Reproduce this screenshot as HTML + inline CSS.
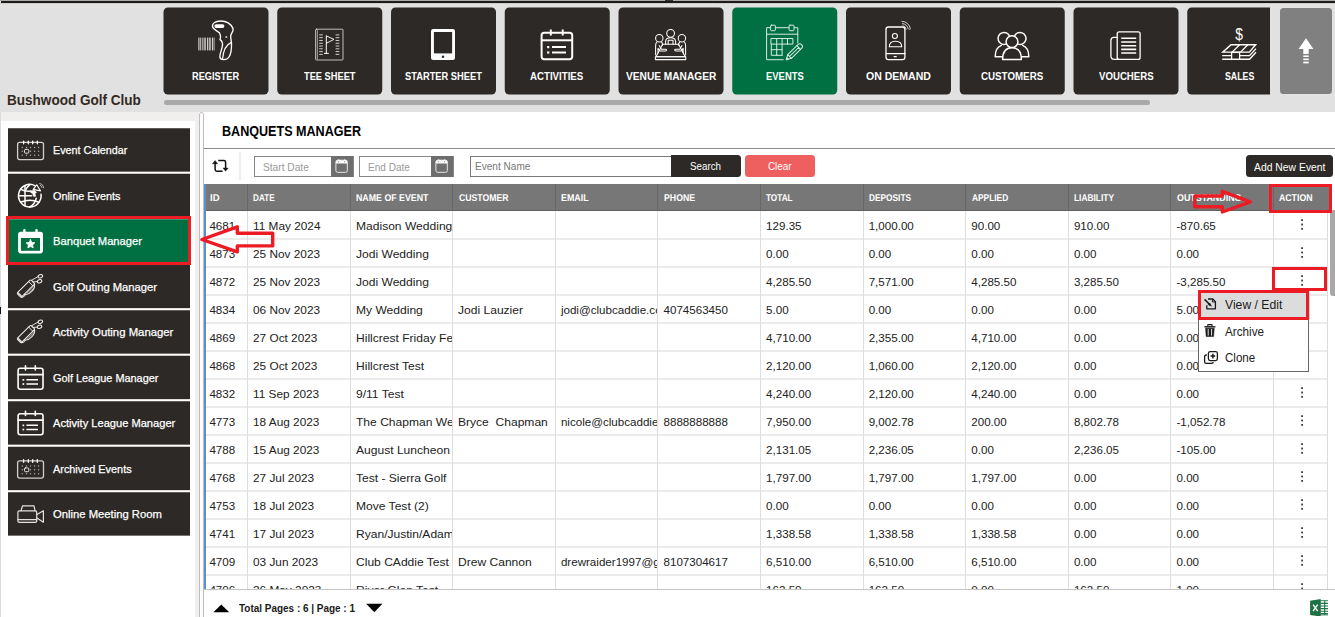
<!DOCTYPE html>
<html lang="en"><head><meta charset="utf-8"><title>Banquets Manager</title>
<style>
html,body{margin:0;padding:0;}
body{width:1335px;height:617px;overflow:hidden;background:#fff;position:relative;font-family:"Liberation Sans",sans-serif;}
.b{position:absolute;}
.t{position:absolute;white-space:pre;transform-origin:0 0;display:block;}
svg{position:absolute;}
</style></head>
<body>
<div class="b" style="left:0.00px;top:0.00px;width:1335.00px;height:112.00px;background:#e1e1e1;"></div>
<div class="b" style="left:0.00px;top:0.00px;width:1335.00px;height:1.00px;background:#ababab;"></div>
<div class="b" style="left:1.00px;top:1.00px;width:1334.00px;height:2.00px;background:#1d1a18;"></div>
<div class="b" style="left:0.00px;top:3.00px;width:1335.00px;height:1.00px;background:#cdcdcd;"></div>
<div class="b" style="left:665.40px;top:0.00px;width:7.50px;height:1.00px;background:#333;"></div>
<span class="t" style="left:7.30px;top:89.81px;font-size:14.4px;line-height:20px;font-weight:700;color:#33291f;transform:scaleX(0.9410);">Bushwood Golf Club</span>
<div class="b" style="left:163.00px;top:7.00px;width:1107.30px;height:88.00px;overflow:hidden;"><svg width="1172" height="88" viewBox="163 7 1172 88" style="left:0;top:0"><rect x="163.5" y="7.45" width="105" height="87" rx="4.5" fill="#2d2926"/><g fill="none" stroke="#fff" stroke-width="1.2" stroke-linecap="round" stroke-linejoin="round"><rect x="198.3" y="37.6" width="1.2" height="12.8" fill="#cfcfcf" stroke="none"/><rect x="200.2" y="37.6" width="0.8" height="12.8" fill="#cfcfcf" stroke="none"/><rect x="201.8" y="37.6" width="0.9" height="12.8" fill="#cfcfcf" stroke="none"/><rect x="203.6" y="37.6" width="1.1" height="12.8" fill="#cfcfcf" stroke="none"/><rect x="205.2" y="37.6" width="0.8" height="12.8" fill="#cfcfcf" stroke="none"/><rect x="207.0" y="37.6" width="1.0" height="12.8" fill="#cfcfcf" stroke="none"/><rect x="208.7" y="37.6" width="1.1" height="12.8" fill="#cfcfcf" stroke="none"/><rect x="210.3" y="37.6" width="0.8" height="12.8" fill="#cfcfcf" stroke="none"/><rect x="212.0" y="37.6" width="1.0" height="12.8" fill="#cfcfcf" stroke="none"/><rect x="213.6" y="37.6" width="0.9" height="12.8" fill="#cfcfcf" stroke="none"/><path d="M212.4 26.2 C212.2 23.2 215.5 21.1 220.5 21 C226 21 231 24 233.1 28.6 C233.6 30.6 232 32.8 230.8 35 C230.3 37.5 231.4 40 231.5 43.5 C231.6 49 231 54 229 57 C227.5 59.2 224.5 59.8 222 59.4 C220 59 219.6 57.2 220 55 C220.6 51.5 222.6 47.5 222.6 44 C222.6 42 221.6 40.6 220 39.4 C220.6 38 220.9 36.6 220.4 35.4 C219.9 34 219.3 33 219.4 32.6 C217 31 212.8 29.4 212.4 26.2 Z" stroke-width="1.35"/><path d="M231 42.6 C226.5 44.5 223.4 50 222.6 58.8" stroke-width="1.2"/><rect x="214.3" y="24.2" width="10.1" height="3.8" rx="1.9" fill="#fff" stroke="none"/><ellipse cx="226.3" cy="37" rx="1.1" ry="0.8" fill="#fff" stroke="none"/></g><rect x="277.25" y="7.45" width="105" height="87" rx="4.5" fill="#2d2926"/><g fill="none" stroke="#fff" stroke-width="1.2" stroke-linecap="round" stroke-linejoin="round"><rect x="315.6" y="29.2" width="27.4" height="30.8" rx="0.8" stroke="#e4e4e4" stroke-width="0.8"/><path d="M317.3 30.5V59" stroke="#e4e4e4" stroke-width="0.7"/><path d="M319.2 34.90H322.8M335.6 34.90H339.3" stroke="#d0d0d0" stroke-width="1" stroke-linecap="butt"/><path d="M319.2 37.68H322.8M335.6 37.68H339.3" stroke="#d0d0d0" stroke-width="1" stroke-linecap="butt"/><path d="M319.2 40.46H322.8M335.6 40.46H339.3" stroke="#d0d0d0" stroke-width="1" stroke-linecap="butt"/><path d="M319.2 43.24H322.8M335.6 43.24H339.3" stroke="#d0d0d0" stroke-width="1" stroke-linecap="butt"/><path d="M319.2 46.02H322.8M335.6 46.02H339.3" stroke="#d0d0d0" stroke-width="1" stroke-linecap="butt"/><path d="M319.2 48.80H322.8M335.6 48.80H339.3" stroke="#d0d0d0" stroke-width="1" stroke-linecap="butt"/><path d="M319.2 51.58H322.8M335.6 51.58H339.3" stroke="#d0d0d0" stroke-width="1" stroke-linecap="butt"/><path d="M319.2 54.36H322.8M335.6 54.36H339.3" stroke="#d0d0d0" stroke-width="1" stroke-linecap="butt"/><path d="M326.3 36V53.3M324.4 53.4H328.4" stroke-width="1"/><path d="M326.4 36L334 39.4L326.4 43.2" stroke-width="0.9"/></g><rect x="391.0" y="7.45" width="105" height="87" rx="4.5" fill="#2d2926"/><g fill="none" stroke="#fff" stroke-width="1.2" stroke-linecap="round" stroke-linejoin="round"><rect x="431" y="29.1" width="24" height="30.9" rx="2.2" fill="#fff" stroke="none"/><rect x="433.9" y="32" width="18.2" height="21.4" fill="#2d2926" stroke="none"/><circle cx="443" cy="56.8" r="1.25" fill="#2d2926" stroke="none"/></g><rect x="504.75" y="7.45" width="105" height="87" rx="4.5" fill="#2d2926"/><g fill="none" stroke="#fff" stroke-width="1.2" stroke-linecap="round" stroke-linejoin="round"><rect x="541.6" y="32.7" width="30.6" height="26.5" rx="2.6" stroke-width="2"/><path d="M541.6 40.3H572.2" stroke-width="2" stroke-linecap="butt"/><path d="M550.8 29.5V35.6M562.7 29.5V35.6" stroke-width="2" stroke-linecap="butt"/><path d="M552 47.1H566M552 52.5H566" stroke-width="2" stroke-linecap="butt"/><rect x="547.1" y="46" width="2.2" height="2.2" fill="#fff" stroke="none"/><rect x="547.1" y="51.4" width="2.2" height="2.2" fill="#fff" stroke="none"/></g><rect x="618.5" y="7.45" width="105" height="87" rx="4.5" fill="#2d2926"/><g fill="none" stroke="#fff" stroke-width="1.2" stroke-linecap="round" stroke-linejoin="round"><g stroke-width="1.05"><circle cx="670.6" cy="33.3" r="3.9"/><circle cx="659.3" cy="38.2" r="3.7"/><circle cx="681.9" cy="38.2" r="3.7"/><path d="M665.6 44V41.5C665.6 39 667.5 37.8 670.6 37.8C673.7 37.8 675.6 39 675.6 41.5V44"/><path d="M668.2 44V40.3H673V44"/><path d="M662.6 44.3H678.6L685.2 56.8H656Z"/><path d="M655.4 56.8H685.8V59.6H655.4Z"/><path d="M656.8 42.2C655.8 43 655.6 44 655.6 46V55M661.6 42.3C662.6 43 662.8 44.2 662.4 45.4"/><path d="M659.2 45.6L661.4 49.2H665.6C666.8 49.2 666.8 50.9 665.6 50.9H660L658 48.4V53"/><path d="M684.4 42.2C685.4 43 685.6 44 685.6 46V55M679.6 42.3C678.6 43 678.4 44.2 678.8 45.4"/><path d="M682 45.6L679.8 49.2H675.6C674.4 49.2 674.4 50.9 675.6 50.9H681.2L683.2 48.4V53"/></g></g><rect x="732.25" y="7.45" width="105" height="87" rx="4.5" fill="#007042"/><g fill="none" stroke="#fff" stroke-width="1.2" stroke-linecap="round" stroke-linejoin="round"><g stroke="#d5ebe0" stroke-width="1"><path d="M797.8 43V27.7H766.6V59.7H783.2"/><path d="M766.6 34.2H797.8"/><rect x="770.6" y="25.2" width="4.8" height="5.5" rx="0.8" fill="#007042"/><rect x="789.1" y="25.2" width="4.9" height="5.5" rx="0.8" fill="#007042"/><path d="M771.3 38.5H792.9V44.1H771.3ZM776.7 38.5V55.3M782.1 38.5V55.3M787.5 38.5V44.1M771.3 44.1V55.3H782.1M771.3 49.7H782.1"/><g transform="translate(786.3 59.7) rotate(-44.5)"><path d="M0 0L4.6 -2.6H19.2C20.6 -2.6 21.4 -1.6 21.4 0C21.4 1.6 20.6 2.6 19.2 2.6H4.6Z"/><path d="M4.6 -2.6V2.6M17.4 -2.6V2.6M4.6 0H17.4"/><path d="M0 0L1.8 -1V1Z" fill="#d5ebe0"/></g></g></g><rect x="846.0" y="7.45" width="105" height="87" rx="4.5" fill="#2d2926"/><g fill="none" stroke="#fff" stroke-width="1.2" stroke-linecap="round" stroke-linejoin="round"><rect x="886" y="27" width="18.9" height="32.6" rx="2.4" stroke-width="1.3"/><path d="M886 53.6H904.9" stroke-width="1.2"/><path d="M894.2 56.7H896.2" stroke-width="1.3"/><circle cx="894.9" cy="36" r="2.5" stroke-width="1.1"/><path d="M889.3 46.8C889.3 43.3 891.6 41.3 895.5 41.3C899.4 41.3 901.7 43.3 901.7 46.8Z" stroke-width="1.1"/><path d="M902 21.3A8.3 8.3 0 0 1 910.3 28.6M902.4 23.6A6 6 0 0 1 908.2 28.9M902.8 25.8A3.8 3.8 0 0 1 906.2 29.2" stroke-width="0.9" stroke="#e4e4e4"/><circle cx="909.9" cy="29.6" r="0.5" fill="#ddd" stroke="none"/></g><rect x="959.75" y="7.45" width="105" height="87" rx="4.5" fill="#2d2926"/><g fill="none" stroke="#fff" stroke-width="1.2" stroke-linecap="round" stroke-linejoin="round"><g stroke-width="1.5"><path d="M1006 44.1A6 6 0 1 1 1009.6 36.2"/><path d="M1014.4 36.2A6 6 0 1 1 1018 44.1"/><path d="M1003.4 56.7H995.2C995.2 51 997 47 1001.4 45.4"/><path d="M1020.6 56.7H1028.8C1028.8 51 1027 47 1022.6 45.4"/><circle cx="1012" cy="41.7" r="5.9" fill="#2d2926"/><path d="M1002.6 59.6C1002.6 52 1005.6 47.8 1012 47.8C1018.4 47.8 1021.4 52 1021.4 59.6Z" fill="#2d2926"/></g></g><rect x="1073.5" y="7.45" width="105" height="87" rx="4.5" fill="#2d2926"/><g fill="none" stroke="#fff" stroke-width="1.2" stroke-linecap="round" stroke-linejoin="round"><rect x="1117.2" y="31.8" width="22.9" height="27.6" rx="2" stroke-width="1.3"/><path d="M1117.2 37.3H1114C1112 37.3 1110.9 38.6 1110.9 40.4V55.8C1110.9 58 1112.2 59.4 1114.4 59.4H1119" stroke-width="1.3"/><path d="M1121.2 38.3H1136.2M1121.2 42H1136.2M1121.2 45.8H1136.2M1121.2 49.4H1136.2M1121.2 53H1136.2" stroke-width="1.6" stroke-linecap="butt"/></g><rect x="1187.25" y="7.45" width="105" height="87" rx="4.5" fill="#2d2926"/><g fill="none" stroke="#fff" stroke-width="1.2" stroke-linecap="round" stroke-linejoin="round"><text transform="translate(1239.1 40) scale(0.84 1)" x="0" y="0" font-family="Liberation Sans, sans-serif" font-size="16.5" text-anchor="middle" fill="#fff" stroke="none">$</text><g stroke-width="1.45" stroke-linejoin="miter" stroke-linecap="butt"><path d="M1222.8 52.1L1231 44.8H1255.6L1249.4 52.1Z"/><path d="M1239.6 44.8L1232.2 52.1M1247.8 44.8L1240.6 52.1" stroke-width="1.3"/><path d="M1222.2 55.6H1249.6L1256 48.6M1222.2 59.2H1249.6L1256 52.2" stroke-width="1.35"/><rect x="1231.6" y="52.4" width="8" height="6.8" fill="#2d2926" stroke-width="1.3"/></g></g></svg><span class="t" style="left:29.20px;top:61.69px;font-size:11px;line-height:15px;font-weight:700;color:#fff;transform:scaleX(0.8393);">REGISTER</span><span class="t" style="left:140.80px;top:61.69px;font-size:11px;line-height:15px;font-weight:700;color:#fff;transform:scaleX(0.8425);">TEE SHEET</span><span class="t" style="left:241.85px;top:61.69px;font-size:11px;line-height:15px;font-weight:700;color:#fff;transform:scaleX(0.8464);">STARTER SHEET</span><span class="t" style="left:367.40px;top:61.69px;font-size:11px;line-height:15px;font-weight:700;color:#fff;transform:scaleX(0.8808);">ACTIVITIES</span><span class="t" style="left:462.65px;top:61.69px;font-size:11px;line-height:15px;font-weight:700;color:#fff;transform:scaleX(0.9233);">VENUE MANAGER</span><span class="t" style="left:602.65px;top:61.69px;font-size:11px;line-height:15px;font-weight:700;color:#fff;transform:scaleX(0.8588);">EVENTS</span><span class="t" style="left:702.85px;top:61.69px;font-size:11px;line-height:15px;font-weight:700;color:#fff;transform:scaleX(0.9566);">ON DEMAND</span><span class="t" style="left:817.95px;top:61.69px;font-size:11px;line-height:15px;font-weight:700;color:#fff;transform:scaleX(0.8874);">CUSTOMERS</span><span class="t" style="left:935.50px;top:61.69px;font-size:11px;line-height:15px;font-weight:700;color:#fff;transform:scaleX(0.8758);">VOUCHERS</span><span class="t" style="left:1061.90px;top:61.69px;font-size:11px;line-height:15px;font-weight:700;color:#fff;transform:scaleX(0.7986);">SALES</span></div>
<div class="b" style="left:1280.20px;top:8.30px;width:51.80px;height:85.70px;background:#808080;border-radius:3.5px;"><svg width="51.8" height="85.7" viewBox="1280.2 8.3 51.8 85.7" style="left:0;top:0" fill="#fff" stroke="none"><path d="M1306.2 38.6L1313.6 49.4H1308.9V54.2H1303.5V49.4H1298.8Z"/><rect x="1303.5" y="55.7" width="5.4" height="1.6"/><rect x="1303.5" y="58.8" width="5.4" height="1.6"/><rect x="1303.5" y="61.9" width="5.4" height="1.8"/></svg></div>
<div class="b" style="left:163.50px;top:100.40px;width:986.80px;height:4.60px;background:#a9a9a9;border-radius:2.3px;"></div>
<div class="b" style="left:0.00px;top:112.00px;width:199.40px;height:505.00px;background:#f0efed;"></div>
<div class="b" style="left:1.40px;top:120.80px;width:193.60px;height:497.00px;background:#fff;"></div>
<div class="b" style="left:0.00px;top:112.00px;width:1.00px;height:505.00px;background:#dcdcdc;"></div>
<div class="b" style="left:0.00px;top:307.00px;width:1.00px;height:7.00px;background:#111;"></div>
<svg width="200" height="505" viewBox="0 112 200 505" style="left:0;top:112px"><rect x="8" y="128.25" width="182" height="43.4" fill="#2d2926"/><g fill="none" stroke="#fff" stroke-width="1.2" stroke-linecap="round" stroke-linejoin="round"><rect x="17.6" y="142.40" width="25.9" height="17.2" rx="2" stroke="#cfcfcf" stroke-width="1.3"/><path d="M23.6 141.20V143.80" stroke="#fff" stroke-width="1.3"/><path d="M28.3 141.20V143.80" stroke="#fff" stroke-width="1.3"/><path d="M32.7 141.20V143.80" stroke="#fff" stroke-width="1.3"/><path d="M37.3 141.20V143.80" stroke="#fff" stroke-width="1.3"/><circle cx="22.3" cy="147.50" r="0.7" fill="#aaa" stroke="none"/><circle cx="26.5" cy="147.50" r="0.7" fill="#aaa" stroke="none"/><circle cx="30.5" cy="147.50" r="0.7" fill="#aaa" stroke="none"/><circle cx="34.6" cy="147.50" r="0.7" fill="#aaa" stroke="none"/><circle cx="38.6" cy="147.50" r="0.7" fill="#aaa" stroke="none"/><circle cx="22.3" cy="151.30" r="0.7" fill="#aaa" stroke="none"/><circle cx="30.5" cy="151.30" r="0.7" fill="#aaa" stroke="none"/><circle cx="34.6" cy="151.30" r="0.7" fill="#aaa" stroke="none"/><circle cx="38.6" cy="151.30" r="0.7" fill="#aaa" stroke="none"/><circle cx="22.3" cy="155.30" r="0.7" fill="#aaa" stroke="none"/><circle cx="26.5" cy="155.30" r="0.7" fill="#aaa" stroke="none"/><circle cx="30.5" cy="155.30" r="0.7" fill="#aaa" stroke="none"/><circle cx="34.6" cy="155.30" r="0.7" fill="#aaa" stroke="none"/><circle cx="38.6" cy="155.30" r="0.7" fill="#aaa" stroke="none"/><rect x="24.5" y="149.40" width="4.3" height="3.8" rx="1" stroke="#e8e8e8" stroke-width="1"/></g><rect x="8" y="173.75" width="182" height="43.4" fill="#2d2926"/><g fill="none" stroke="#fff" stroke-width="1.2" stroke-linecap="round" stroke-linejoin="round"><g stroke-width="1.5"><path d="M35.2 185.8A11.3 11.3 0 1 0 41 194.2"/><path d="M25 186V205.8M18.6 195.8H31.6"/><path d="M30 184.6C27.6 186.4 26.2 188.6 25.4 190.4M29.8 207C33.4 205 35.6 201.4 36.2 198.2"/><path d="M20.8 189.4C24 191 27.6 191.4 30.6 191M20.6 202.2C26 199.8 33.6 199.8 39 202.2"/></g><path d="M33.2 189.4L36.7 184.8L40.5 190.8Z" stroke-width="1.2"/><path d="M31.2 190.8L34.6 190.2L36.6 192.4L35 193.6L35.8 196.2L33.6 196.6L32.6 193.6L30.6 192.4Z" fill="#fff" stroke-width="0.5"/><path d="M39.6 183.6A4.4 4.4 0 0 1 43.6 187.8M40.4 185.4A2.4 2.4 0 0 1 42 187.4" stroke-width="0.8" stroke="#ddd"/></g><rect x="8" y="219.25" width="182" height="43.4" fill="#007042"/><g fill="none" stroke="#fff" stroke-width="1.2" stroke-linecap="round" stroke-linejoin="round"><rect x="18.1" y="231.7" width="24.9" height="21.7" rx="2.8" fill="#fff" stroke="none"/><rect x="23.2" y="229.1" width="2.4" height="5" rx="1" fill="#fff" stroke="none"/><rect x="35.3" y="229.1" width="2.4" height="5" rx="1" fill="#fff" stroke="none"/><rect x="20.9" y="238" width="19.1" height="12.8" fill="#007042" stroke="none"/><polygon points="30.50,239.60 31.79,242.42 34.87,242.78 32.59,244.88 33.20,247.92 30.50,246.40 27.80,247.92 28.41,244.88 26.13,242.78 29.21,242.42" fill="#fff" stroke="#fff" stroke-width="0.8"/></g><rect x="8" y="264.75" width="182" height="43.4" fill="#2d2926"/><g fill="none" stroke="#fff" stroke-width="1.2" stroke-linecap="round" stroke-linejoin="round"><g transform="translate(0 0.00)" stroke="#ececec" stroke-width="1.05"><g transform="translate(19.6 296.0) rotate(-44.5)"><rect x="0" y="-3.9" width="19.4" height="5.9" rx="1.2"/><rect x="0.2" y="-3.7" width="1.7" height="6.6" fill="#d8d8d8" stroke="none"/><path d="M16.6 -3.9V2" stroke-width="0.9"/><path d="M0.6 2C1 3.4 2.4 3.6 4.6 3.2M4.6 2C7 6.4 16.5 6.6 19.4 1.4"/><path d="M7 3.2H16.4M8.2 4.4H15.2" stroke-width="0.7" stroke="#cfcfcf"/><path d="M19.4 -2.8L26.6 -1M19.4 -0.6L22.6 2" stroke-width="0.9"/><ellipse cx="28.6" cy="0.5" rx="2.3" ry="1.6" transform="rotate(25 28.6 0.5)"/><ellipse cx="24.6" cy="3.4" rx="2.3" ry="1.6" transform="rotate(25 24.6 3.4)"/></g></g></g><rect x="8" y="310.25" width="182" height="43.4" fill="#2d2926"/><g fill="none" stroke="#fff" stroke-width="1.2" stroke-linecap="round" stroke-linejoin="round"><g transform="translate(0 45.50)" stroke="#ececec" stroke-width="1.05"><g transform="translate(19.6 296.0) rotate(-44.5)"><rect x="0" y="-3.9" width="19.4" height="5.9" rx="1.2"/><rect x="0.2" y="-3.7" width="1.7" height="6.6" fill="#d8d8d8" stroke="none"/><path d="M16.6 -3.9V2" stroke-width="0.9"/><path d="M0.6 2C1 3.4 2.4 3.6 4.6 3.2M4.6 2C7 6.4 16.5 6.6 19.4 1.4"/><path d="M7 3.2H16.4M8.2 4.4H15.2" stroke-width="0.7" stroke="#cfcfcf"/><path d="M19.4 -2.8L26.6 -1M19.4 -0.6L22.6 2" stroke-width="0.9"/><ellipse cx="28.6" cy="0.5" rx="2.3" ry="1.6" transform="rotate(25 28.6 0.5)"/><ellipse cx="24.6" cy="3.4" rx="2.3" ry="1.6" transform="rotate(25 24.6 3.4)"/></g></g></g><rect x="8" y="355.75" width="182" height="43.4" fill="#2d2926"/><g fill="none" stroke="#fff" stroke-width="1.2" stroke-linecap="round" stroke-linejoin="round"><g transform="translate(0 0.00)"><rect x="18.1" y="368.2" width="24.9" height="21.1" rx="2.2" stroke-width="1.6"/><path d="M18.1 374.6H43" stroke-width="1.6"/><path d="M25.5 365.8V370M35.3 365.8V370" stroke-width="1.6"/><path d="M26.4 379.8H38M26.4 384H38" stroke-width="1.6" stroke-linecap="butt"/><rect x="22.5" y="379" width="1.7" height="1.7" fill="#fff" stroke="none"/><rect x="22.5" y="383.2" width="1.7" height="1.7" fill="#fff" stroke="none"/></g></g><rect x="8" y="401.25" width="182" height="43.4" fill="#2d2926"/><g fill="none" stroke="#fff" stroke-width="1.2" stroke-linecap="round" stroke-linejoin="round"><g transform="translate(0 45.50)"><rect x="18.1" y="368.2" width="24.9" height="21.1" rx="2.2" stroke-width="1.6"/><path d="M18.1 374.6H43" stroke-width="1.6"/><path d="M25.5 365.8V370M35.3 365.8V370" stroke-width="1.6"/><path d="M26.4 379.8H38M26.4 384H38" stroke-width="1.6" stroke-linecap="butt"/><rect x="22.5" y="379" width="1.7" height="1.7" fill="#fff" stroke="none"/><rect x="22.5" y="383.2" width="1.7" height="1.7" fill="#fff" stroke="none"/></g></g><rect x="8" y="446.75" width="182" height="43.4" fill="#2d2926"/><g fill="none" stroke="#fff" stroke-width="1.2" stroke-linecap="round" stroke-linejoin="round"><rect x="17.6" y="460.90" width="25.9" height="17.2" rx="2" stroke="#cfcfcf" stroke-width="1.3"/><path d="M23.6 459.70V462.30" stroke="#fff" stroke-width="1.3"/><path d="M28.3 459.70V462.30" stroke="#fff" stroke-width="1.3"/><path d="M32.7 459.70V462.30" stroke="#fff" stroke-width="1.3"/><path d="M37.3 459.70V462.30" stroke="#fff" stroke-width="1.3"/><circle cx="22.3" cy="466.00" r="0.7" fill="#aaa" stroke="none"/><circle cx="26.5" cy="466.00" r="0.7" fill="#aaa" stroke="none"/><circle cx="30.5" cy="466.00" r="0.7" fill="#aaa" stroke="none"/><circle cx="34.6" cy="466.00" r="0.7" fill="#aaa" stroke="none"/><circle cx="38.6" cy="466.00" r="0.7" fill="#aaa" stroke="none"/><circle cx="22.3" cy="469.80" r="0.7" fill="#aaa" stroke="none"/><circle cx="30.5" cy="469.80" r="0.7" fill="#aaa" stroke="none"/><circle cx="34.6" cy="469.80" r="0.7" fill="#aaa" stroke="none"/><circle cx="38.6" cy="469.80" r="0.7" fill="#aaa" stroke="none"/><circle cx="22.3" cy="473.80" r="0.7" fill="#aaa" stroke="none"/><circle cx="26.5" cy="473.80" r="0.7" fill="#aaa" stroke="none"/><circle cx="30.5" cy="473.80" r="0.7" fill="#aaa" stroke="none"/><circle cx="34.6" cy="473.80" r="0.7" fill="#aaa" stroke="none"/><circle cx="38.6" cy="473.80" r="0.7" fill="#aaa" stroke="none"/><rect x="24.5" y="467.90" width="4.3" height="3.8" rx="1" stroke="#e8e8e8" stroke-width="1"/></g><rect x="8" y="492.25" width="182" height="43.4" fill="#2d2926"/><g fill="none" stroke="#fff" stroke-width="1.2" stroke-linecap="round" stroke-linejoin="round"><g stroke="#e2e2e2" stroke-width="1.2"><rect x="17.9" y="510.9" width="18.8" height="11.4" rx="1.4"/><path d="M17.9 519.7H36.7"/><path d="M21 510.6L22.6 505.8H34L35 510.6"/><path d="M37 514.6L43.4 510.8V522.2L37 518"/></g></g></svg>
<span class="t" style="left:52.50px;top:143.09px;font-size:11px;line-height:15px;font-weight:400;color:#fff;transform:scaleX(0.9812);-webkit-text-stroke:0.25px #fff;">Event Calendar</span>
<span class="t" style="left:52.50px;top:188.59px;font-size:11px;line-height:15px;font-weight:400;color:#fff;transform:scaleX(0.9856);-webkit-text-stroke:0.25px #fff;">Online Events</span>
<span class="t" style="left:52.50px;top:234.09px;font-size:11px;line-height:15px;font-weight:400;color:#fff;transform:scaleX(1.0177);-webkit-text-stroke:0.25px #fff;">Banquet Manager</span>
<span class="t" style="left:52.50px;top:279.59px;font-size:11px;line-height:15px;font-weight:400;color:#fff;transform:scaleX(1.0174);-webkit-text-stroke:0.25px #fff;">Golf Outing Manager</span>
<span class="t" style="left:52.50px;top:325.09px;font-size:11px;line-height:15px;font-weight:400;color:#fff;transform:scaleX(1.0310);-webkit-text-stroke:0.25px #fff;">Activity Outing Manager</span>
<span class="t" style="left:52.50px;top:370.59px;font-size:11px;line-height:15px;font-weight:400;color:#fff;transform:scaleX(0.9904);-webkit-text-stroke:0.25px #fff;">Golf League Manager</span>
<span class="t" style="left:52.50px;top:416.09px;font-size:11px;line-height:15px;font-weight:400;color:#fff;transform:scaleX(1.0101);-webkit-text-stroke:0.25px #fff;">Activity League Manager</span>
<span class="t" style="left:52.50px;top:461.59px;font-size:11px;line-height:15px;font-weight:400;color:#fff;transform:scaleX(0.9889);-webkit-text-stroke:0.25px #fff;">Archived Events</span>
<span class="t" style="left:52.50px;top:507.09px;font-size:11px;line-height:15px;font-weight:400;color:#fff;transform:scaleX(1.0226);-webkit-text-stroke:0.25px #fff;">Online Meeting Room</span>
<div class="b" style="left:6.00px;top:216.00px;width:185.00px;height:49.00px;border:3.4px solid #ed1c24;box-sizing:border-box;"></div>
<div class="b" style="left:199.00px;top:112.00px;width:5.00px;height:510.00px;background:#fdfdfd;border:1px solid #bdbdbd;border-radius:2.5px;box-sizing:border-box;"></div>
<span class="t" style="left:221.50px;top:120.75px;font-size:14px;line-height:20px;font-weight:700;color:#000;transform:scaleX(0.8980);">BANQUETS MANAGER</span>
<div class="b" style="left:204.00px;top:147.60px;width:1131.00px;height:1.30px;background:#8a8a8a;"></div>
<div class="b" style="left:212.00px;top:159.00px;width:17.00px;height:14.00px;"><svg width="17" height="14" viewBox="212 159 17 14" style="left:0;top:0" fill="none" stroke="#111" stroke-width="1.5" stroke-linejoin="round"><path d="M215.1 163V169.6Q215.1 171.3 216.8 171.3H222.6"/><path d="M218.2 160.5H223.9Q225.6 160.5 225.6 162.2V168.6"/><path d="M215.1 160.5L217.8 163.8H212.4Z" fill="#111" stroke-width="0.4"/><path d="M225.6 171.2L228.2 168H223Z" fill="#111" stroke-width="0.4"/></svg></div>
<div class="b" style="left:239.00px;top:152.00px;width:2.00px;height:28.00px;background:#ececec;"></div>
<div class="b" style="left:254.00px;top:155.50px;width:100.00px;height:21.50px;background:#fff;border:1px solid #858585;box-sizing:border-box;"></div><div class="b" style="left:331.00px;top:156.00px;width:22.00px;height:20.50px;background:#6e6e6e;"><svg width="22" height="20.5" viewBox="331 156 22 20.5" style="left:0;top:0" fill="none" stroke="#e6e6e6" stroke-width="1"><rect x="335.9" y="160.2" width="11.4" height="12.1" rx="1.6"/><path d="M336 163.4V161.8Q336 160.2 337.6 160.2H345.7Q347.3 160.2 347.3 161.8V163.4Z" fill="#fff" stroke="none"/><path d="M338.6 159.4V161.6M344.6 159.4V161.6" stroke="#fff" stroke-width="1.2"/><path d="M338.6 161V162.4M344.6 161V162.4" stroke="#777" stroke-width="0.7"/></svg></div><span class="t" style="left:263.30px;top:159.69px;font-size:11px;line-height:15px;font-weight:400;color:#9a9a9a;transform:scaleX(0.9247);">Start Date</span>
<div class="b" style="left:359.00px;top:155.50px;width:95.00px;height:21.50px;background:#fff;border:1px solid #858585;box-sizing:border-box;"></div><div class="b" style="left:430.50px;top:156.00px;width:22.50px;height:20.50px;background:#6e6e6e;"><svg width="22" height="20.5" viewBox="331 156 22 20.5" style="left:0;top:0" fill="none" stroke="#e6e6e6" stroke-width="1"><rect x="335.9" y="160.2" width="11.4" height="12.1" rx="1.6"/><path d="M336 163.4V161.8Q336 160.2 337.6 160.2H345.7Q347.3 160.2 347.3 161.8V163.4Z" fill="#fff" stroke="none"/><path d="M338.6 159.4V161.6M344.6 159.4V161.6" stroke="#fff" stroke-width="1.2"/><path d="M338.6 161V162.4M344.6 161V162.4" stroke="#777" stroke-width="0.7"/></svg></div><span class="t" style="left:368.30px;top:159.69px;font-size:11px;line-height:15px;font-weight:400;color:#9a9a9a;transform:scaleX(0.9134);">End Date</span>
<div class="b" style="left:469.80px;top:155.90px;width:205.00px;height:21.40px;background:#fff;border:1.3px solid #7a7a7a;box-sizing:border-box;"></div>
<span class="t" style="left:474.90px;top:159.29px;font-size:11px;line-height:15px;font-weight:400;color:#777;transform:scaleX(0.9152);">Event Name</span>
<div class="b" style="left:670.50px;top:155.30px;width:70.30px;height:22.00px;background:#2d2926;border-radius:0 3.5px 3.5px 0;"></div>
<span class="t" style="left:690.00px;top:159.49px;font-size:11px;line-height:15px;font-weight:400;color:#fff;transform:scaleX(0.8893);">Search</span>
<div class="b" style="left:745.40px;top:155.30px;width:69.80px;height:22.00px;background:#ee5f5f;border-radius:3.5px;"></div>
<span class="t" style="left:768.25px;top:159.49px;font-size:11px;line-height:15px;font-weight:400;color:#fff;transform:scaleX(0.8936);">Clear</span>
<div class="b" style="left:1245.70px;top:154.90px;width:87.50px;height:22.30px;background:#2d2926;border-radius:3.5px;"></div>
<span class="t" style="left:1253.95px;top:158.68px;font-size:11.3px;line-height:16px;font-weight:400;color:#fff;transform:scaleX(0.9181);">Add New Event</span>
<div class="b" style="left:204.40px;top:184.00px;width:1125.20px;height:405.60px;background:#fff;overflow:hidden;"><div class="b" style="left:0.00px;top:0.00px;width:1125.20px;height:27.00px;background:#777;"></div><div class="b" style="left:0.00px;top:25.50px;width:1125.20px;height:1.50px;background:#606060;"></div><span class="t" style="left:5.40px;top:6.80px;font-size:9.8px;line-height:14px;font-weight:700;color:#fff;transform:scale(0.9682,1.0001) rotate(0.03deg);transform-origin:0 10.40px;">ID</span><div class="b" style="left:42.60px;top:0.00px;width:1.00px;height:27.00px;background:#676767;"></div><span class="t" style="left:49.10px;top:6.80px;font-size:9.8px;line-height:14px;font-weight:700;color:#fff;transform:scale(0.8323,1.0001) rotate(0.03deg);transform-origin:0 10.40px;">DATE</span><div class="b" style="left:145.60px;top:0.00px;width:1.00px;height:27.00px;background:#676767;"></div><span class="t" style="left:151.70px;top:6.80px;font-size:9.8px;line-height:14px;font-weight:700;color:#fff;transform:scale(0.8999,1.0001) rotate(0.03deg);transform-origin:0 10.40px;">NAME OF EVENT</span><div class="b" style="left:247.60px;top:0.00px;width:1.00px;height:27.00px;background:#676767;"></div><span class="t" style="left:254.30px;top:6.80px;font-size:9.8px;line-height:14px;font-weight:700;color:#fff;transform:scale(0.8857,1.0001) rotate(0.03deg);transform-origin:0 10.40px;">CUSTOMER</span><div class="b" style="left:350.60px;top:0.00px;width:1.00px;height:27.00px;background:#676767;"></div><span class="t" style="left:356.90px;top:6.80px;font-size:9.8px;line-height:14px;font-weight:700;color:#fff;transform:scale(0.9087,1.0001) rotate(0.03deg);transform-origin:0 10.40px;">EMAIL</span><div class="b" style="left:452.60px;top:0.00px;width:1.00px;height:27.00px;background:#676767;"></div><span class="t" style="left:459.50px;top:6.80px;font-size:9.8px;line-height:14px;font-weight:700;color:#fff;transform:scale(0.8926,1.0001) rotate(0.03deg);transform-origin:0 10.40px;">PHONE</span><div class="b" style="left:555.60px;top:0.00px;width:1.00px;height:27.00px;background:#676767;"></div><span class="t" style="left:562.10px;top:6.80px;font-size:9.8px;line-height:14px;font-weight:700;color:#fff;transform:scale(0.8378,1.0001) rotate(0.03deg);transform-origin:0 10.40px;">TOTAL</span><div class="b" style="left:658.60px;top:0.00px;width:1.00px;height:27.00px;background:#676767;"></div><span class="t" style="left:664.70px;top:6.80px;font-size:9.8px;line-height:14px;font-weight:700;color:#fff;transform:scale(0.8477,1.0001) rotate(0.03deg);transform-origin:0 10.40px;">DEPOSITS</span><div class="b" style="left:760.60px;top:0.00px;width:1.00px;height:27.00px;background:#676767;"></div><span class="t" style="left:767.30px;top:6.80px;font-size:9.8px;line-height:14px;font-weight:700;color:#fff;transform:scale(0.8524,1.0001) rotate(0.03deg);transform-origin:0 10.40px;">APPLIED</span><div class="b" style="left:863.60px;top:0.00px;width:1.00px;height:27.00px;background:#676767;"></div><span class="t" style="left:869.90px;top:6.80px;font-size:9.8px;line-height:14px;font-weight:700;color:#fff;transform:scale(0.8545,1.0001) rotate(0.03deg);transform-origin:0 10.40px;">LIABILITY</span><div class="b" style="left:965.60px;top:0.00px;width:1.00px;height:27.00px;background:#676767;"></div><span class="t" style="left:972.50px;top:6.80px;font-size:9.8px;line-height:14px;font-weight:700;color:#fff;transform:scale(0.9069,1.0001) rotate(0.03deg);transform-origin:0 10.40px;">OUTSTANDING</span><div class="b" style="left:1068.60px;top:0.00px;width:1.00px;height:27.00px;background:#676767;"></div><span class="t" style="left:1074.60px;top:6.80px;font-size:9.8px;line-height:14px;font-weight:700;color:#fff;transform:scale(0.8918,1.0001) rotate(0.03deg);transform-origin:0 10.40px;">ACTION</span><div class="b" style="left:0.00px;top:54.00px;width:1123.20px;height:2.00px;background:#ebebeb;"></div><div class="b" style="left:1.60px;top:27.00px;width:40.50px;height:27.00px;overflow:hidden;"><span class="t" style="left:3.40px;top:6.78px;font-size:11.6px;line-height:16px;font-weight:400;color:#222;transform:scaleX(1.0);">4681</span></div><div class="b" style="left:43.10px;top:27.00px;width:101.60px;height:27.00px;overflow:hidden;"><span class="t" style="left:5.60px;top:6.78px;font-size:11.6px;line-height:16px;font-weight:400;color:#222;transform:scaleX(1.02);">11 May 2024</span></div><div class="b" style="left:145.70px;top:27.00px;width:101.60px;height:27.00px;overflow:hidden;"><span class="t" style="left:5.60px;top:6.78px;font-size:11.6px;line-height:16px;font-weight:400;color:#222;transform:scaleX(1.04);">Madison Wedding</span></div><div class="b" style="left:556.10px;top:27.00px;width:101.60px;height:27.00px;overflow:hidden;"><span class="t" style="left:5.60px;top:6.78px;font-size:11.6px;line-height:16px;font-weight:400;color:#222;transform:scaleX(1.0);">129.35</span></div><div class="b" style="left:658.70px;top:27.00px;width:101.60px;height:27.00px;overflow:hidden;"><span class="t" style="left:5.60px;top:6.78px;font-size:11.6px;line-height:16px;font-weight:400;color:#222;transform:scaleX(1.0);">1,000.00</span></div><div class="b" style="left:761.30px;top:27.00px;width:101.60px;height:27.00px;overflow:hidden;"><span class="t" style="left:5.60px;top:6.78px;font-size:11.6px;line-height:16px;font-weight:400;color:#222;transform:scaleX(1.0);">90.00</span></div><div class="b" style="left:863.90px;top:27.00px;width:101.60px;height:27.00px;overflow:hidden;"><span class="t" style="left:5.60px;top:6.78px;font-size:11.6px;line-height:16px;font-weight:400;color:#222;transform:scaleX(1.0);">910.00</span></div><div class="b" style="left:966.50px;top:27.00px;width:101.60px;height:27.00px;overflow:hidden;"><span class="t" style="left:5.60px;top:6.78px;font-size:11.6px;line-height:16px;font-weight:400;color:#222;transform:scaleX(1.0);">-870.65</span></div><div class="b" style="left:1096.50px;top:34.00px;width:2.20px;height:13.00px;"><svg width="2.2" height="13" viewBox="0 0 2.2 13" style="left:0;top:0"><rect x="0.2" y="1.2" width="1.8" height="1.8" fill="#3a3a44"/><rect x="0.2" y="5.6" width="1.8" height="1.8" fill="#3a3a44"/><rect x="0.2" y="10" width="1.8" height="1.8" fill="#3a3a44"/></svg></div><div class="b" style="left:0.00px;top:82.00px;width:1123.20px;height:2.00px;background:#ebebeb;"></div><div class="b" style="left:1.60px;top:55.00px;width:40.50px;height:27.00px;overflow:hidden;"><span class="t" style="left:3.40px;top:6.78px;font-size:11.6px;line-height:16px;font-weight:400;color:#222;transform:scaleX(1.0);">4873</span></div><div class="b" style="left:43.10px;top:55.00px;width:101.60px;height:27.00px;overflow:hidden;"><span class="t" style="left:5.60px;top:6.78px;font-size:11.6px;line-height:16px;font-weight:400;color:#222;transform:scaleX(1.02);">25 Nov 2023</span></div><div class="b" style="left:145.70px;top:55.00px;width:101.60px;height:27.00px;overflow:hidden;"><span class="t" style="left:5.60px;top:6.78px;font-size:11.6px;line-height:16px;font-weight:400;color:#222;transform:scaleX(1.04);">Jodi Wedding</span></div><div class="b" style="left:556.10px;top:55.00px;width:101.60px;height:27.00px;overflow:hidden;"><span class="t" style="left:5.60px;top:6.78px;font-size:11.6px;line-height:16px;font-weight:400;color:#222;transform:scaleX(1.0);">0.00</span></div><div class="b" style="left:658.70px;top:55.00px;width:101.60px;height:27.00px;overflow:hidden;"><span class="t" style="left:5.60px;top:6.78px;font-size:11.6px;line-height:16px;font-weight:400;color:#222;transform:scaleX(1.0);">0.00</span></div><div class="b" style="left:761.30px;top:55.00px;width:101.60px;height:27.00px;overflow:hidden;"><span class="t" style="left:5.60px;top:6.78px;font-size:11.6px;line-height:16px;font-weight:400;color:#222;transform:scaleX(1.0);">0.00</span></div><div class="b" style="left:863.90px;top:55.00px;width:101.60px;height:27.00px;overflow:hidden;"><span class="t" style="left:5.60px;top:6.78px;font-size:11.6px;line-height:16px;font-weight:400;color:#222;transform:scaleX(1.0);">0.00</span></div><div class="b" style="left:966.50px;top:55.00px;width:101.60px;height:27.00px;overflow:hidden;"><span class="t" style="left:5.60px;top:6.78px;font-size:11.6px;line-height:16px;font-weight:400;color:#222;transform:scaleX(1.0);">0.00</span></div><div class="b" style="left:1096.50px;top:62.00px;width:2.20px;height:13.00px;"><svg width="2.2" height="13" viewBox="0 0 2.2 13" style="left:0;top:0"><rect x="0.2" y="1.2" width="1.8" height="1.8" fill="#3a3a44"/><rect x="0.2" y="5.6" width="1.8" height="1.8" fill="#3a3a44"/><rect x="0.2" y="10" width="1.8" height="1.8" fill="#3a3a44"/></svg></div><div class="b" style="left:0.00px;top:110.00px;width:1123.20px;height:2.00px;background:#ebebeb;"></div><div class="b" style="left:1.60px;top:83.00px;width:40.50px;height:27.00px;overflow:hidden;"><span class="t" style="left:3.40px;top:6.78px;font-size:11.6px;line-height:16px;font-weight:400;color:#222;transform:scaleX(1.0);">4872</span></div><div class="b" style="left:43.10px;top:83.00px;width:101.60px;height:27.00px;overflow:hidden;"><span class="t" style="left:5.60px;top:6.78px;font-size:11.6px;line-height:16px;font-weight:400;color:#222;transform:scaleX(1.02);">25 Nov 2023</span></div><div class="b" style="left:145.70px;top:83.00px;width:101.60px;height:27.00px;overflow:hidden;"><span class="t" style="left:5.60px;top:6.78px;font-size:11.6px;line-height:16px;font-weight:400;color:#222;transform:scaleX(1.04);">Jodi Wedding</span></div><div class="b" style="left:556.10px;top:83.00px;width:101.60px;height:27.00px;overflow:hidden;"><span class="t" style="left:5.60px;top:6.78px;font-size:11.6px;line-height:16px;font-weight:400;color:#222;transform:scaleX(1.0);">4,285.50</span></div><div class="b" style="left:658.70px;top:83.00px;width:101.60px;height:27.00px;overflow:hidden;"><span class="t" style="left:5.60px;top:6.78px;font-size:11.6px;line-height:16px;font-weight:400;color:#222;transform:scaleX(1.0);">7,571.00</span></div><div class="b" style="left:761.30px;top:83.00px;width:101.60px;height:27.00px;overflow:hidden;"><span class="t" style="left:5.60px;top:6.78px;font-size:11.6px;line-height:16px;font-weight:400;color:#222;transform:scaleX(1.0);">4,285.50</span></div><div class="b" style="left:863.90px;top:83.00px;width:101.60px;height:27.00px;overflow:hidden;"><span class="t" style="left:5.60px;top:6.78px;font-size:11.6px;line-height:16px;font-weight:400;color:#222;transform:scaleX(1.0);">3,285.50</span></div><div class="b" style="left:966.50px;top:83.00px;width:101.60px;height:27.00px;overflow:hidden;"><span class="t" style="left:5.60px;top:6.78px;font-size:11.6px;line-height:16px;font-weight:400;color:#222;transform:scaleX(1.0);">-3,285.50</span></div><div class="b" style="left:1096.50px;top:90.00px;width:2.20px;height:13.00px;"><svg width="2.2" height="13" viewBox="0 0 2.2 13" style="left:0;top:0"><rect x="0.2" y="1.2" width="1.8" height="1.8" fill="#3a3a44"/><rect x="0.2" y="5.6" width="1.8" height="1.8" fill="#3a3a44"/><rect x="0.2" y="10" width="1.8" height="1.8" fill="#3a3a44"/></svg></div><div class="b" style="left:0.00px;top:138.00px;width:1123.20px;height:2.00px;background:#ebebeb;"></div><div class="b" style="left:1.60px;top:111.00px;width:40.50px;height:27.00px;overflow:hidden;"><span class="t" style="left:3.40px;top:6.78px;font-size:11.6px;line-height:16px;font-weight:400;color:#222;transform:scaleX(1.0);">4834</span></div><div class="b" style="left:43.10px;top:111.00px;width:101.60px;height:27.00px;overflow:hidden;"><span class="t" style="left:5.60px;top:6.78px;font-size:11.6px;line-height:16px;font-weight:400;color:#222;transform:scaleX(1.02);">06 Nov 2023</span></div><div class="b" style="left:145.70px;top:111.00px;width:101.60px;height:27.00px;overflow:hidden;"><span class="t" style="left:5.60px;top:6.78px;font-size:11.6px;line-height:16px;font-weight:400;color:#222;transform:scaleX(1.04);">My Wedding</span></div><div class="b" style="left:248.30px;top:111.00px;width:101.60px;height:27.00px;overflow:hidden;"><span class="t" style="left:5.60px;top:6.78px;font-size:11.6px;line-height:16px;font-weight:400;color:#222;transform:scaleX(1.04);">Jodi Lauzier</span></div><div class="b" style="left:350.90px;top:111.00px;width:101.60px;height:27.00px;overflow:hidden;"><span class="t" style="left:5.60px;top:6.78px;font-size:11.6px;line-height:16px;font-weight:400;color:#222;transform:scaleX(1.0);">jodi@clubcaddie.com</span></div><div class="b" style="left:453.50px;top:111.00px;width:101.60px;height:27.00px;overflow:hidden;"><span class="t" style="left:5.60px;top:6.78px;font-size:11.6px;line-height:16px;font-weight:400;color:#222;transform:scaleX(1.0);">4074563450</span></div><div class="b" style="left:556.10px;top:111.00px;width:101.60px;height:27.00px;overflow:hidden;"><span class="t" style="left:5.60px;top:6.78px;font-size:11.6px;line-height:16px;font-weight:400;color:#222;transform:scaleX(1.0);">5.00</span></div><div class="b" style="left:658.70px;top:111.00px;width:101.60px;height:27.00px;overflow:hidden;"><span class="t" style="left:5.60px;top:6.78px;font-size:11.6px;line-height:16px;font-weight:400;color:#222;transform:scaleX(1.0);">0.00</span></div><div class="b" style="left:761.30px;top:111.00px;width:101.60px;height:27.00px;overflow:hidden;"><span class="t" style="left:5.60px;top:6.78px;font-size:11.6px;line-height:16px;font-weight:400;color:#222;transform:scaleX(1.0);">0.00</span></div><div class="b" style="left:863.90px;top:111.00px;width:101.60px;height:27.00px;overflow:hidden;"><span class="t" style="left:5.60px;top:6.78px;font-size:11.6px;line-height:16px;font-weight:400;color:#222;transform:scaleX(1.0);">0.00</span></div><div class="b" style="left:966.50px;top:111.00px;width:101.60px;height:27.00px;overflow:hidden;"><span class="t" style="left:5.60px;top:6.78px;font-size:11.6px;line-height:16px;font-weight:400;color:#222;transform:scaleX(1.0);">5.00</span></div><div class="b" style="left:0.00px;top:166.00px;width:1123.20px;height:2.00px;background:#ebebeb;"></div><div class="b" style="left:1.60px;top:139.00px;width:40.50px;height:27.00px;overflow:hidden;"><span class="t" style="left:3.40px;top:6.78px;font-size:11.6px;line-height:16px;font-weight:400;color:#222;transform:scaleX(1.0);">4869</span></div><div class="b" style="left:43.10px;top:139.00px;width:101.60px;height:27.00px;overflow:hidden;"><span class="t" style="left:5.60px;top:6.78px;font-size:11.6px;line-height:16px;font-weight:400;color:#222;transform:scaleX(1.02);">27 Oct 2023</span></div><div class="b" style="left:145.70px;top:139.00px;width:101.60px;height:27.00px;overflow:hidden;"><span class="t" style="left:5.60px;top:6.78px;font-size:11.6px;line-height:16px;font-weight:400;color:#222;transform:scaleX(1.04);">Hillcrest Friday Feast</span></div><div class="b" style="left:556.10px;top:139.00px;width:101.60px;height:27.00px;overflow:hidden;"><span class="t" style="left:5.60px;top:6.78px;font-size:11.6px;line-height:16px;font-weight:400;color:#222;transform:scaleX(1.0);">4,710.00</span></div><div class="b" style="left:658.70px;top:139.00px;width:101.60px;height:27.00px;overflow:hidden;"><span class="t" style="left:5.60px;top:6.78px;font-size:11.6px;line-height:16px;font-weight:400;color:#222;transform:scaleX(1.0);">2,355.00</span></div><div class="b" style="left:761.30px;top:139.00px;width:101.60px;height:27.00px;overflow:hidden;"><span class="t" style="left:5.60px;top:6.78px;font-size:11.6px;line-height:16px;font-weight:400;color:#222;transform:scaleX(1.0);">4,710.00</span></div><div class="b" style="left:863.90px;top:139.00px;width:101.60px;height:27.00px;overflow:hidden;"><span class="t" style="left:5.60px;top:6.78px;font-size:11.6px;line-height:16px;font-weight:400;color:#222;transform:scaleX(1.0);">0.00</span></div><div class="b" style="left:966.50px;top:139.00px;width:101.60px;height:27.00px;overflow:hidden;"><span class="t" style="left:5.60px;top:6.78px;font-size:11.6px;line-height:16px;font-weight:400;color:#222;transform:scaleX(1.0);">0.00</span></div><div class="b" style="left:0.00px;top:194.00px;width:1123.20px;height:2.00px;background:#ebebeb;"></div><div class="b" style="left:1.60px;top:167.00px;width:40.50px;height:27.00px;overflow:hidden;"><span class="t" style="left:3.40px;top:6.78px;font-size:11.6px;line-height:16px;font-weight:400;color:#222;transform:scaleX(1.0);">4868</span></div><div class="b" style="left:43.10px;top:167.00px;width:101.60px;height:27.00px;overflow:hidden;"><span class="t" style="left:5.60px;top:6.78px;font-size:11.6px;line-height:16px;font-weight:400;color:#222;transform:scaleX(1.02);">25 Oct 2023</span></div><div class="b" style="left:145.70px;top:167.00px;width:101.60px;height:27.00px;overflow:hidden;"><span class="t" style="left:5.60px;top:6.78px;font-size:11.6px;line-height:16px;font-weight:400;color:#222;transform:scaleX(1.04);">Hillcrest Test</span></div><div class="b" style="left:556.10px;top:167.00px;width:101.60px;height:27.00px;overflow:hidden;"><span class="t" style="left:5.60px;top:6.78px;font-size:11.6px;line-height:16px;font-weight:400;color:#222;transform:scaleX(1.0);">2,120.00</span></div><div class="b" style="left:658.70px;top:167.00px;width:101.60px;height:27.00px;overflow:hidden;"><span class="t" style="left:5.60px;top:6.78px;font-size:11.6px;line-height:16px;font-weight:400;color:#222;transform:scaleX(1.0);">1,060.00</span></div><div class="b" style="left:761.30px;top:167.00px;width:101.60px;height:27.00px;overflow:hidden;"><span class="t" style="left:5.60px;top:6.78px;font-size:11.6px;line-height:16px;font-weight:400;color:#222;transform:scaleX(1.0);">2,120.00</span></div><div class="b" style="left:863.90px;top:167.00px;width:101.60px;height:27.00px;overflow:hidden;"><span class="t" style="left:5.60px;top:6.78px;font-size:11.6px;line-height:16px;font-weight:400;color:#222;transform:scaleX(1.0);">0.00</span></div><div class="b" style="left:966.50px;top:167.00px;width:101.60px;height:27.00px;overflow:hidden;"><span class="t" style="left:5.60px;top:6.78px;font-size:11.6px;line-height:16px;font-weight:400;color:#222;transform:scaleX(1.0);">0.00</span></div><div class="b" style="left:0.00px;top:222.00px;width:1123.20px;height:2.00px;background:#ebebeb;"></div><div class="b" style="left:1.60px;top:195.00px;width:40.50px;height:27.00px;overflow:hidden;"><span class="t" style="left:3.40px;top:6.78px;font-size:11.6px;line-height:16px;font-weight:400;color:#222;transform:scaleX(1.0);">4832</span></div><div class="b" style="left:43.10px;top:195.00px;width:101.60px;height:27.00px;overflow:hidden;"><span class="t" style="left:5.60px;top:6.78px;font-size:11.6px;line-height:16px;font-weight:400;color:#222;transform:scaleX(1.02);">11 Sep 2023</span></div><div class="b" style="left:145.70px;top:195.00px;width:101.60px;height:27.00px;overflow:hidden;"><span class="t" style="left:5.60px;top:6.78px;font-size:11.6px;line-height:16px;font-weight:400;color:#222;transform:scaleX(1.04);">9/11 Test</span></div><div class="b" style="left:556.10px;top:195.00px;width:101.60px;height:27.00px;overflow:hidden;"><span class="t" style="left:5.60px;top:6.78px;font-size:11.6px;line-height:16px;font-weight:400;color:#222;transform:scaleX(1.0);">4,240.00</span></div><div class="b" style="left:658.70px;top:195.00px;width:101.60px;height:27.00px;overflow:hidden;"><span class="t" style="left:5.60px;top:6.78px;font-size:11.6px;line-height:16px;font-weight:400;color:#222;transform:scaleX(1.0);">2,120.00</span></div><div class="b" style="left:761.30px;top:195.00px;width:101.60px;height:27.00px;overflow:hidden;"><span class="t" style="left:5.60px;top:6.78px;font-size:11.6px;line-height:16px;font-weight:400;color:#222;transform:scaleX(1.0);">4,240.00</span></div><div class="b" style="left:863.90px;top:195.00px;width:101.60px;height:27.00px;overflow:hidden;"><span class="t" style="left:5.60px;top:6.78px;font-size:11.6px;line-height:16px;font-weight:400;color:#222;transform:scaleX(1.0);">0.00</span></div><div class="b" style="left:966.50px;top:195.00px;width:101.60px;height:27.00px;overflow:hidden;"><span class="t" style="left:5.60px;top:6.78px;font-size:11.6px;line-height:16px;font-weight:400;color:#222;transform:scaleX(1.0);">0.00</span></div><div class="b" style="left:1096.50px;top:202.00px;width:2.20px;height:13.00px;"><svg width="2.2" height="13" viewBox="0 0 2.2 13" style="left:0;top:0"><rect x="0.2" y="1.2" width="1.8" height="1.8" fill="#3a3a44"/><rect x="0.2" y="5.6" width="1.8" height="1.8" fill="#3a3a44"/><rect x="0.2" y="10" width="1.8" height="1.8" fill="#3a3a44"/></svg></div><div class="b" style="left:0.00px;top:250.00px;width:1123.20px;height:2.00px;background:#ebebeb;"></div><div class="b" style="left:1.60px;top:223.00px;width:40.50px;height:27.00px;overflow:hidden;"><span class="t" style="left:3.40px;top:6.78px;font-size:11.6px;line-height:16px;font-weight:400;color:#222;transform:scaleX(1.0);">4773</span></div><div class="b" style="left:43.10px;top:223.00px;width:101.60px;height:27.00px;overflow:hidden;"><span class="t" style="left:5.60px;top:6.78px;font-size:11.6px;line-height:16px;font-weight:400;color:#222;transform:scaleX(1.02);">18 Aug 2023</span></div><div class="b" style="left:145.70px;top:223.00px;width:101.60px;height:27.00px;overflow:hidden;"><span class="t" style="left:5.60px;top:6.78px;font-size:11.6px;line-height:16px;font-weight:400;color:#222;transform:scaleX(1.04);">The Chapman Wedding</span></div><div class="b" style="left:248.30px;top:223.00px;width:101.60px;height:27.00px;overflow:hidden;"><span class="t" style="left:5.60px;top:6.78px;font-size:11.6px;line-height:16px;font-weight:400;color:#222;transform:scaleX(1.04);">Bryce  Chapman</span></div><div class="b" style="left:350.90px;top:223.00px;width:101.60px;height:27.00px;overflow:hidden;"><span class="t" style="left:5.60px;top:6.78px;font-size:11.6px;line-height:16px;font-weight:400;color:#222;transform:scaleX(1.0);">nicole@clubcaddie.com</span></div><div class="b" style="left:453.50px;top:223.00px;width:101.60px;height:27.00px;overflow:hidden;"><span class="t" style="left:5.60px;top:6.78px;font-size:11.6px;line-height:16px;font-weight:400;color:#222;transform:scaleX(1.0);">8888888888</span></div><div class="b" style="left:556.10px;top:223.00px;width:101.60px;height:27.00px;overflow:hidden;"><span class="t" style="left:5.60px;top:6.78px;font-size:11.6px;line-height:16px;font-weight:400;color:#222;transform:scaleX(1.0);">7,950.00</span></div><div class="b" style="left:658.70px;top:223.00px;width:101.60px;height:27.00px;overflow:hidden;"><span class="t" style="left:5.60px;top:6.78px;font-size:11.6px;line-height:16px;font-weight:400;color:#222;transform:scaleX(1.0);">9,002.78</span></div><div class="b" style="left:761.30px;top:223.00px;width:101.60px;height:27.00px;overflow:hidden;"><span class="t" style="left:5.60px;top:6.78px;font-size:11.6px;line-height:16px;font-weight:400;color:#222;transform:scaleX(1.0);">200.00</span></div><div class="b" style="left:863.90px;top:223.00px;width:101.60px;height:27.00px;overflow:hidden;"><span class="t" style="left:5.60px;top:6.78px;font-size:11.6px;line-height:16px;font-weight:400;color:#222;transform:scaleX(1.0);">8,802.78</span></div><div class="b" style="left:966.50px;top:223.00px;width:101.60px;height:27.00px;overflow:hidden;"><span class="t" style="left:5.60px;top:6.78px;font-size:11.6px;line-height:16px;font-weight:400;color:#222;transform:scaleX(1.0);">-1,052.78</span></div><div class="b" style="left:1096.50px;top:230.00px;width:2.20px;height:13.00px;"><svg width="2.2" height="13" viewBox="0 0 2.2 13" style="left:0;top:0"><rect x="0.2" y="1.2" width="1.8" height="1.8" fill="#3a3a44"/><rect x="0.2" y="5.6" width="1.8" height="1.8" fill="#3a3a44"/><rect x="0.2" y="10" width="1.8" height="1.8" fill="#3a3a44"/></svg></div><div class="b" style="left:0.00px;top:278.00px;width:1123.20px;height:2.00px;background:#ebebeb;"></div><div class="b" style="left:1.60px;top:251.00px;width:40.50px;height:27.00px;overflow:hidden;"><span class="t" style="left:3.40px;top:6.78px;font-size:11.6px;line-height:16px;font-weight:400;color:#222;transform:scaleX(1.0);">4788</span></div><div class="b" style="left:43.10px;top:251.00px;width:101.60px;height:27.00px;overflow:hidden;"><span class="t" style="left:5.60px;top:6.78px;font-size:11.6px;line-height:16px;font-weight:400;color:#222;transform:scaleX(1.02);">15 Aug 2023</span></div><div class="b" style="left:145.70px;top:251.00px;width:101.60px;height:27.00px;overflow:hidden;"><span class="t" style="left:5.60px;top:6.78px;font-size:11.6px;line-height:16px;font-weight:400;color:#222;transform:scaleX(1.04);">August Luncheon</span></div><div class="b" style="left:556.10px;top:251.00px;width:101.60px;height:27.00px;overflow:hidden;"><span class="t" style="left:5.60px;top:6.78px;font-size:11.6px;line-height:16px;font-weight:400;color:#222;transform:scaleX(1.0);">2,131.05</span></div><div class="b" style="left:658.70px;top:251.00px;width:101.60px;height:27.00px;overflow:hidden;"><span class="t" style="left:5.60px;top:6.78px;font-size:11.6px;line-height:16px;font-weight:400;color:#222;transform:scaleX(1.0);">2,236.05</span></div><div class="b" style="left:761.30px;top:251.00px;width:101.60px;height:27.00px;overflow:hidden;"><span class="t" style="left:5.60px;top:6.78px;font-size:11.6px;line-height:16px;font-weight:400;color:#222;transform:scaleX(1.0);">0.00</span></div><div class="b" style="left:863.90px;top:251.00px;width:101.60px;height:27.00px;overflow:hidden;"><span class="t" style="left:5.60px;top:6.78px;font-size:11.6px;line-height:16px;font-weight:400;color:#222;transform:scaleX(1.0);">2,236.05</span></div><div class="b" style="left:966.50px;top:251.00px;width:101.60px;height:27.00px;overflow:hidden;"><span class="t" style="left:5.60px;top:6.78px;font-size:11.6px;line-height:16px;font-weight:400;color:#222;transform:scaleX(1.0);">-105.00</span></div><div class="b" style="left:1096.50px;top:258.00px;width:2.20px;height:13.00px;"><svg width="2.2" height="13" viewBox="0 0 2.2 13" style="left:0;top:0"><rect x="0.2" y="1.2" width="1.8" height="1.8" fill="#3a3a44"/><rect x="0.2" y="5.6" width="1.8" height="1.8" fill="#3a3a44"/><rect x="0.2" y="10" width="1.8" height="1.8" fill="#3a3a44"/></svg></div><div class="b" style="left:0.00px;top:306.00px;width:1123.20px;height:2.00px;background:#ebebeb;"></div><div class="b" style="left:1.60px;top:279.00px;width:40.50px;height:27.00px;overflow:hidden;"><span class="t" style="left:3.40px;top:6.78px;font-size:11.6px;line-height:16px;font-weight:400;color:#222;transform:scaleX(1.0);">4768</span></div><div class="b" style="left:43.10px;top:279.00px;width:101.60px;height:27.00px;overflow:hidden;"><span class="t" style="left:5.60px;top:6.78px;font-size:11.6px;line-height:16px;font-weight:400;color:#222;transform:scaleX(1.02);">27 Jul 2023</span></div><div class="b" style="left:145.70px;top:279.00px;width:101.60px;height:27.00px;overflow:hidden;"><span class="t" style="left:5.60px;top:6.78px;font-size:11.6px;line-height:16px;font-weight:400;color:#222;transform:scaleX(1.04);">Test - Sierra Golf</span></div><div class="b" style="left:556.10px;top:279.00px;width:101.60px;height:27.00px;overflow:hidden;"><span class="t" style="left:5.60px;top:6.78px;font-size:11.6px;line-height:16px;font-weight:400;color:#222;transform:scaleX(1.0);">1,797.00</span></div><div class="b" style="left:658.70px;top:279.00px;width:101.60px;height:27.00px;overflow:hidden;"><span class="t" style="left:5.60px;top:6.78px;font-size:11.6px;line-height:16px;font-weight:400;color:#222;transform:scaleX(1.0);">1,797.00</span></div><div class="b" style="left:761.30px;top:279.00px;width:101.60px;height:27.00px;overflow:hidden;"><span class="t" style="left:5.60px;top:6.78px;font-size:11.6px;line-height:16px;font-weight:400;color:#222;transform:scaleX(1.0);">1,797.00</span></div><div class="b" style="left:863.90px;top:279.00px;width:101.60px;height:27.00px;overflow:hidden;"><span class="t" style="left:5.60px;top:6.78px;font-size:11.6px;line-height:16px;font-weight:400;color:#222;transform:scaleX(1.0);">0.00</span></div><div class="b" style="left:966.50px;top:279.00px;width:101.60px;height:27.00px;overflow:hidden;"><span class="t" style="left:5.60px;top:6.78px;font-size:11.6px;line-height:16px;font-weight:400;color:#222;transform:scaleX(1.0);">0.00</span></div><div class="b" style="left:1096.50px;top:286.00px;width:2.20px;height:13.00px;"><svg width="2.2" height="13" viewBox="0 0 2.2 13" style="left:0;top:0"><rect x="0.2" y="1.2" width="1.8" height="1.8" fill="#3a3a44"/><rect x="0.2" y="5.6" width="1.8" height="1.8" fill="#3a3a44"/><rect x="0.2" y="10" width="1.8" height="1.8" fill="#3a3a44"/></svg></div><div class="b" style="left:0.00px;top:334.00px;width:1123.20px;height:2.00px;background:#ebebeb;"></div><div class="b" style="left:1.60px;top:307.00px;width:40.50px;height:27.00px;overflow:hidden;"><span class="t" style="left:3.40px;top:6.78px;font-size:11.6px;line-height:16px;font-weight:400;color:#222;transform:scaleX(1.0);">4753</span></div><div class="b" style="left:43.10px;top:307.00px;width:101.60px;height:27.00px;overflow:hidden;"><span class="t" style="left:5.60px;top:6.78px;font-size:11.6px;line-height:16px;font-weight:400;color:#222;transform:scaleX(1.02);">18 Jul 2023</span></div><div class="b" style="left:145.70px;top:307.00px;width:101.60px;height:27.00px;overflow:hidden;"><span class="t" style="left:5.60px;top:6.78px;font-size:11.6px;line-height:16px;font-weight:400;color:#222;transform:scaleX(1.04);">Move Test (2)</span></div><div class="b" style="left:556.10px;top:307.00px;width:101.60px;height:27.00px;overflow:hidden;"><span class="t" style="left:5.60px;top:6.78px;font-size:11.6px;line-height:16px;font-weight:400;color:#222;transform:scaleX(1.0);">0.00</span></div><div class="b" style="left:658.70px;top:307.00px;width:101.60px;height:27.00px;overflow:hidden;"><span class="t" style="left:5.60px;top:6.78px;font-size:11.6px;line-height:16px;font-weight:400;color:#222;transform:scaleX(1.0);">0.00</span></div><div class="b" style="left:761.30px;top:307.00px;width:101.60px;height:27.00px;overflow:hidden;"><span class="t" style="left:5.60px;top:6.78px;font-size:11.6px;line-height:16px;font-weight:400;color:#222;transform:scaleX(1.0);">0.00</span></div><div class="b" style="left:863.90px;top:307.00px;width:101.60px;height:27.00px;overflow:hidden;"><span class="t" style="left:5.60px;top:6.78px;font-size:11.6px;line-height:16px;font-weight:400;color:#222;transform:scaleX(1.0);">0.00</span></div><div class="b" style="left:966.50px;top:307.00px;width:101.60px;height:27.00px;overflow:hidden;"><span class="t" style="left:5.60px;top:6.78px;font-size:11.6px;line-height:16px;font-weight:400;color:#222;transform:scaleX(1.0);">0.00</span></div><div class="b" style="left:1096.50px;top:314.00px;width:2.20px;height:13.00px;"><svg width="2.2" height="13" viewBox="0 0 2.2 13" style="left:0;top:0"><rect x="0.2" y="1.2" width="1.8" height="1.8" fill="#3a3a44"/><rect x="0.2" y="5.6" width="1.8" height="1.8" fill="#3a3a44"/><rect x="0.2" y="10" width="1.8" height="1.8" fill="#3a3a44"/></svg></div><div class="b" style="left:0.00px;top:362.00px;width:1123.20px;height:2.00px;background:#ebebeb;"></div><div class="b" style="left:1.60px;top:335.00px;width:40.50px;height:27.00px;overflow:hidden;"><span class="t" style="left:3.40px;top:6.78px;font-size:11.6px;line-height:16px;font-weight:400;color:#222;transform:scaleX(1.0);">4741</span></div><div class="b" style="left:43.10px;top:335.00px;width:101.60px;height:27.00px;overflow:hidden;"><span class="t" style="left:5.60px;top:6.78px;font-size:11.6px;line-height:16px;font-weight:400;color:#222;transform:scaleX(1.02);">17 Jul 2023</span></div><div class="b" style="left:145.70px;top:335.00px;width:101.60px;height:27.00px;overflow:hidden;"><span class="t" style="left:5.60px;top:6.78px;font-size:11.6px;line-height:16px;font-weight:400;color:#222;transform:scaleX(1.04);">Ryan/Justin/Adam</span></div><div class="b" style="left:556.10px;top:335.00px;width:101.60px;height:27.00px;overflow:hidden;"><span class="t" style="left:5.60px;top:6.78px;font-size:11.6px;line-height:16px;font-weight:400;color:#222;transform:scaleX(1.0);">1,338.58</span></div><div class="b" style="left:658.70px;top:335.00px;width:101.60px;height:27.00px;overflow:hidden;"><span class="t" style="left:5.60px;top:6.78px;font-size:11.6px;line-height:16px;font-weight:400;color:#222;transform:scaleX(1.0);">1,338.58</span></div><div class="b" style="left:761.30px;top:335.00px;width:101.60px;height:27.00px;overflow:hidden;"><span class="t" style="left:5.60px;top:6.78px;font-size:11.6px;line-height:16px;font-weight:400;color:#222;transform:scaleX(1.0);">1,338.58</span></div><div class="b" style="left:863.90px;top:335.00px;width:101.60px;height:27.00px;overflow:hidden;"><span class="t" style="left:5.60px;top:6.78px;font-size:11.6px;line-height:16px;font-weight:400;color:#222;transform:scaleX(1.0);">0.00</span></div><div class="b" style="left:966.50px;top:335.00px;width:101.60px;height:27.00px;overflow:hidden;"><span class="t" style="left:5.60px;top:6.78px;font-size:11.6px;line-height:16px;font-weight:400;color:#222;transform:scaleX(1.0);">0.00</span></div><div class="b" style="left:1096.50px;top:342.00px;width:2.20px;height:13.00px;"><svg width="2.2" height="13" viewBox="0 0 2.2 13" style="left:0;top:0"><rect x="0.2" y="1.2" width="1.8" height="1.8" fill="#3a3a44"/><rect x="0.2" y="5.6" width="1.8" height="1.8" fill="#3a3a44"/><rect x="0.2" y="10" width="1.8" height="1.8" fill="#3a3a44"/></svg></div><div class="b" style="left:0.00px;top:390.00px;width:1123.20px;height:2.00px;background:#ebebeb;"></div><div class="b" style="left:1.60px;top:363.00px;width:40.50px;height:27.00px;overflow:hidden;"><span class="t" style="left:3.40px;top:6.78px;font-size:11.6px;line-height:16px;font-weight:400;color:#222;transform:scaleX(1.0);">4709</span></div><div class="b" style="left:43.10px;top:363.00px;width:101.60px;height:27.00px;overflow:hidden;"><span class="t" style="left:5.60px;top:6.78px;font-size:11.6px;line-height:16px;font-weight:400;color:#222;transform:scaleX(1.02);">03 Jun 2023</span></div><div class="b" style="left:145.70px;top:363.00px;width:101.60px;height:27.00px;overflow:hidden;"><span class="t" style="left:5.60px;top:6.78px;font-size:11.6px;line-height:16px;font-weight:400;color:#222;transform:scaleX(1.04);">Club CAddie Test</span></div><div class="b" style="left:248.30px;top:363.00px;width:101.60px;height:27.00px;overflow:hidden;"><span class="t" style="left:5.60px;top:6.78px;font-size:11.6px;line-height:16px;font-weight:400;color:#222;transform:scaleX(1.04);">Drew Cannon</span></div><div class="b" style="left:350.90px;top:363.00px;width:101.60px;height:27.00px;overflow:hidden;"><span class="t" style="left:5.60px;top:6.78px;font-size:11.6px;line-height:16px;font-weight:400;color:#222;transform:scaleX(1.0);">drewraider1997@gmail.com</span></div><div class="b" style="left:453.50px;top:363.00px;width:101.60px;height:27.00px;overflow:hidden;"><span class="t" style="left:5.60px;top:6.78px;font-size:11.6px;line-height:16px;font-weight:400;color:#222;transform:scaleX(1.0);">8107304617</span></div><div class="b" style="left:556.10px;top:363.00px;width:101.60px;height:27.00px;overflow:hidden;"><span class="t" style="left:5.60px;top:6.78px;font-size:11.6px;line-height:16px;font-weight:400;color:#222;transform:scaleX(1.0);">6,510.00</span></div><div class="b" style="left:658.70px;top:363.00px;width:101.60px;height:27.00px;overflow:hidden;"><span class="t" style="left:5.60px;top:6.78px;font-size:11.6px;line-height:16px;font-weight:400;color:#222;transform:scaleX(1.0);">6,510.00</span></div><div class="b" style="left:761.30px;top:363.00px;width:101.60px;height:27.00px;overflow:hidden;"><span class="t" style="left:5.60px;top:6.78px;font-size:11.6px;line-height:16px;font-weight:400;color:#222;transform:scaleX(1.0);">6,510.00</span></div><div class="b" style="left:863.90px;top:363.00px;width:101.60px;height:27.00px;overflow:hidden;"><span class="t" style="left:5.60px;top:6.78px;font-size:11.6px;line-height:16px;font-weight:400;color:#222;transform:scaleX(1.0);">0.00</span></div><div class="b" style="left:966.50px;top:363.00px;width:101.60px;height:27.00px;overflow:hidden;"><span class="t" style="left:5.60px;top:6.78px;font-size:11.6px;line-height:16px;font-weight:400;color:#222;transform:scaleX(1.0);">0.00</span></div><div class="b" style="left:1096.50px;top:370.00px;width:2.20px;height:13.00px;"><svg width="2.2" height="13" viewBox="0 0 2.2 13" style="left:0;top:0"><rect x="0.2" y="1.2" width="1.8" height="1.8" fill="#3a3a44"/><rect x="0.2" y="5.6" width="1.8" height="1.8" fill="#3a3a44"/><rect x="0.2" y="10" width="1.8" height="1.8" fill="#3a3a44"/></svg></div><div class="b" style="left:0.00px;top:418.00px;width:1123.20px;height:2.00px;background:#ebebeb;"></div><div class="b" style="left:1.60px;top:391.00px;width:40.50px;height:27.00px;overflow:hidden;"><span class="t" style="left:3.40px;top:6.78px;font-size:11.6px;line-height:16px;font-weight:400;color:#222;transform:scaleX(1.0);">4706</span></div><div class="b" style="left:43.10px;top:391.00px;width:101.60px;height:27.00px;overflow:hidden;"><span class="t" style="left:5.60px;top:6.78px;font-size:11.6px;line-height:16px;font-weight:400;color:#222;transform:scaleX(1.02);">26 May 2023</span></div><div class="b" style="left:145.70px;top:391.00px;width:101.60px;height:27.00px;overflow:hidden;"><span class="t" style="left:5.60px;top:6.78px;font-size:11.6px;line-height:16px;font-weight:400;color:#222;transform:scaleX(1.04);">River Glen Test</span></div><div class="b" style="left:556.10px;top:391.00px;width:101.60px;height:27.00px;overflow:hidden;"><span class="t" style="left:5.60px;top:6.78px;font-size:11.6px;line-height:16px;font-weight:400;color:#222;transform:scaleX(1.0);">162.50</span></div><div class="b" style="left:658.70px;top:391.00px;width:101.60px;height:27.00px;overflow:hidden;"><span class="t" style="left:5.60px;top:6.78px;font-size:11.6px;line-height:16px;font-weight:400;color:#222;transform:scaleX(1.0);">162.50</span></div><div class="b" style="left:761.30px;top:391.00px;width:101.60px;height:27.00px;overflow:hidden;"><span class="t" style="left:5.60px;top:6.78px;font-size:11.6px;line-height:16px;font-weight:400;color:#222;transform:scaleX(1.0);">0.00</span></div><div class="b" style="left:863.90px;top:391.00px;width:101.60px;height:27.00px;overflow:hidden;"><span class="t" style="left:5.60px;top:6.78px;font-size:11.6px;line-height:16px;font-weight:400;color:#222;transform:scaleX(1.0);">162.50</span></div><div class="b" style="left:966.50px;top:391.00px;width:101.60px;height:27.00px;overflow:hidden;"><span class="t" style="left:5.60px;top:6.78px;font-size:11.6px;line-height:16px;font-weight:400;color:#222;transform:scaleX(1.0);">1.00</span></div><div class="b" style="left:1096.50px;top:398.00px;width:2.20px;height:13.00px;"><svg width="2.2" height="13" viewBox="0 0 2.2 13" style="left:0;top:0"><rect x="0.2" y="1.2" width="1.8" height="1.8" fill="#3a3a44"/><rect x="0.2" y="5.6" width="1.8" height="1.8" fill="#3a3a44"/><rect x="0.2" y="10" width="1.8" height="1.8" fill="#3a3a44"/></svg></div><div class="b" style="left:42.60px;top:27.00px;width:1.00px;height:379.00px;background:#dedede;"></div><div class="b" style="left:145.60px;top:27.00px;width:1.00px;height:379.00px;background:#dedede;"></div><div class="b" style="left:247.60px;top:27.00px;width:1.00px;height:379.00px;background:#dedede;"></div><div class="b" style="left:350.60px;top:27.00px;width:1.00px;height:379.00px;background:#dedede;"></div><div class="b" style="left:452.60px;top:27.00px;width:1.00px;height:379.00px;background:#dedede;"></div><div class="b" style="left:555.60px;top:27.00px;width:1.00px;height:379.00px;background:#dedede;"></div><div class="b" style="left:658.60px;top:27.00px;width:1.00px;height:379.00px;background:#dedede;"></div><div class="b" style="left:760.60px;top:27.00px;width:1.00px;height:379.00px;background:#dedede;"></div><div class="b" style="left:863.60px;top:27.00px;width:1.00px;height:379.00px;background:#dedede;"></div><div class="b" style="left:965.60px;top:27.00px;width:1.00px;height:379.00px;background:#dedede;"></div><div class="b" style="left:1068.60px;top:27.00px;width:1.00px;height:379.00px;background:#dedede;"></div></div>
<div class="b" style="left:204.00px;top:184.00px;width:2.00px;height:405.60px;background:#5a91cd;"></div>
<div class="b" style="left:1327.00px;top:211.00px;width:1.00px;height:378.60px;background:#dadada;"></div>
<div class="b" style="left:204.00px;top:589.20px;width:1131.00px;height:1.20px;background:#c4c4c4;"></div>
<div class="b" style="left:1329.60px;top:210.00px;width:7.00px;height:86.00px;background:#a8a8a8;border-radius:3px 0 0 3px;"></div>
<svg width="18" height="10" viewBox="212 603 18 10" style="left:212px;top:603px"><path d="M213.4 612.2L221.3 604.5L229.2 612.2Z" fill="#000"/></svg>
<svg width="18" height="10" viewBox="365 603 18 10" style="left:365px;top:603px"><path d="M366.2 603.8H382.4L374.3 612.2Z" fill="#000"/></svg>
<span class="t" style="left:239.40px;top:600.89px;font-size:11px;line-height:15px;font-weight:700;color:#1a1a1a;transform:scaleX(0.9048);">Total Pages : 6 | Page : 1</span>
<div class="b" style="left:1309.50px;top:598.90px;width:18.80px;height:17.60px;"><svg width="18.8" height="17.6" viewBox="1309.5 598.9 18.8 17.6" style="left:0;top:0"><rect x="1319.4" y="600.6" width="8.6" height="14.2" rx="0.6" fill="#fff" stroke="#1e7145" stroke-width="0.9"/><path d="M1320 603.3H1328M1320 605.9H1328M1320 608.5H1328M1320 611.1H1328M1320 613.5H1328M1324.2 600.6V614.8" stroke="#1e7145" stroke-width="1.1"/><path d="M1309.6 600.6L1320.2 598.9V616.5L1309.6 614.8Z" fill="#1e7145"/><path d="M1312.6 604.6L1317.2 611M1317.2 604.6L1312.6 611" stroke="#fff" stroke-width="1.4" fill="none"/></svg></div>
<div class="b" style="left:1198.20px;top:290.40px;width:110.70px;height:81.20px;background:#fff;border:1px solid #666;box-sizing:border-box;"><div class="b" style="left:0.00px;top:0.00px;width:110.70px;height:27.80px;background:#dcdcdc;"></div><span class="t" style="left:26.20px;top:5.30px;font-size:12.4px;line-height:17px;font-weight:400;color:#1c1c1c;transform:scaleX(0.9826);">View / Edit</span><span class="t" style="left:26.20px;top:32.40px;font-size:12.4px;line-height:17px;font-weight:400;color:#1c1c1c;transform:scaleX(0.9437);">Archive</span><span class="t" style="left:26.20px;top:58.80px;font-size:12.4px;line-height:17px;font-weight:400;color:#1c1c1c;transform:scaleX(0.9328);">Clone</span><svg width="110.7" height="81.2" viewBox="1198.2 290.4 110.7 81.2" style="left:-1px;top:-1px" fill="none" stroke="#1a1a1a" stroke-width="1.3" stroke-linejoin="round"><path d="M1208.2 299.4H1213L1215.6 302V309.2H1207V305.6"/><path d="M1212.6 299.6V302.4H1215.4" stroke-width="1"/><path d="M1204.8 299.8L1210.6 305.6" stroke-width="1.6"/><path d="M1210 303.4L1211.6 306.6L1208.4 305Z" fill="#1a1a1a" stroke-width="0.6"/><path d="M1204.6 327.2H1215.6" stroke-width="1.4"/><path d="M1208 326.6V325H1212.2V326.6" stroke-width="1.1"/><path d="M1205.8 328.6H1214.4L1213.8 336.8H1206.4Z" fill="#1a1a1a" stroke-width="0.6"/><path d="M1208.4 329.4V336M1211.8 329.4V336" stroke="#fff" stroke-width="0.9"/><rect x="1208.6" y="352" width="9" height="9" rx="1.8" stroke-width="1.3"/><path d="M1207 355.4H1206.4Q1204.8 355.4 1204.8 357V362.2Q1204.8 363.8 1206.4 363.8H1211.8Q1213.4 363.8 1213.4 362.4" stroke-width="1.3"/><path d="M1213.1 354.2V358.8M1210.8 356.5H1215.4" stroke-width="1.5"/></svg></div>
<div class="b" style="left:1198.30px;top:290.00px;width:110.70px;height:29.60px;border:3.2px solid #ed1c24;box-sizing:border-box;"></div>
<div class="b" style="left:1271.50px;top:267.00px;width:55.60px;height:24.00px;border:3px solid #ed1c24;box-sizing:border-box;"></div>
<div class="b" style="left:1269.00px;top:184.00px;width:62.50px;height:28.60px;border:3.6px solid #ed1c24;box-sizing:border-box;"></div>
<svg width="1335" height="617" viewBox="0 0 1335 617" style="left:0;top:0;pointer-events:none" fill="none" stroke="#ed1c24" stroke-width="3.4" stroke-linejoin="round"><path d="M201.9 239.5L237.3 226.8V233.3H272.7V245.9H237.3V251.9Z"/><path d="M1250.3 201.8L1222.3 191.3V196H1194.8V206.7H1222.3V212Z"/></svg>
</body></html>
